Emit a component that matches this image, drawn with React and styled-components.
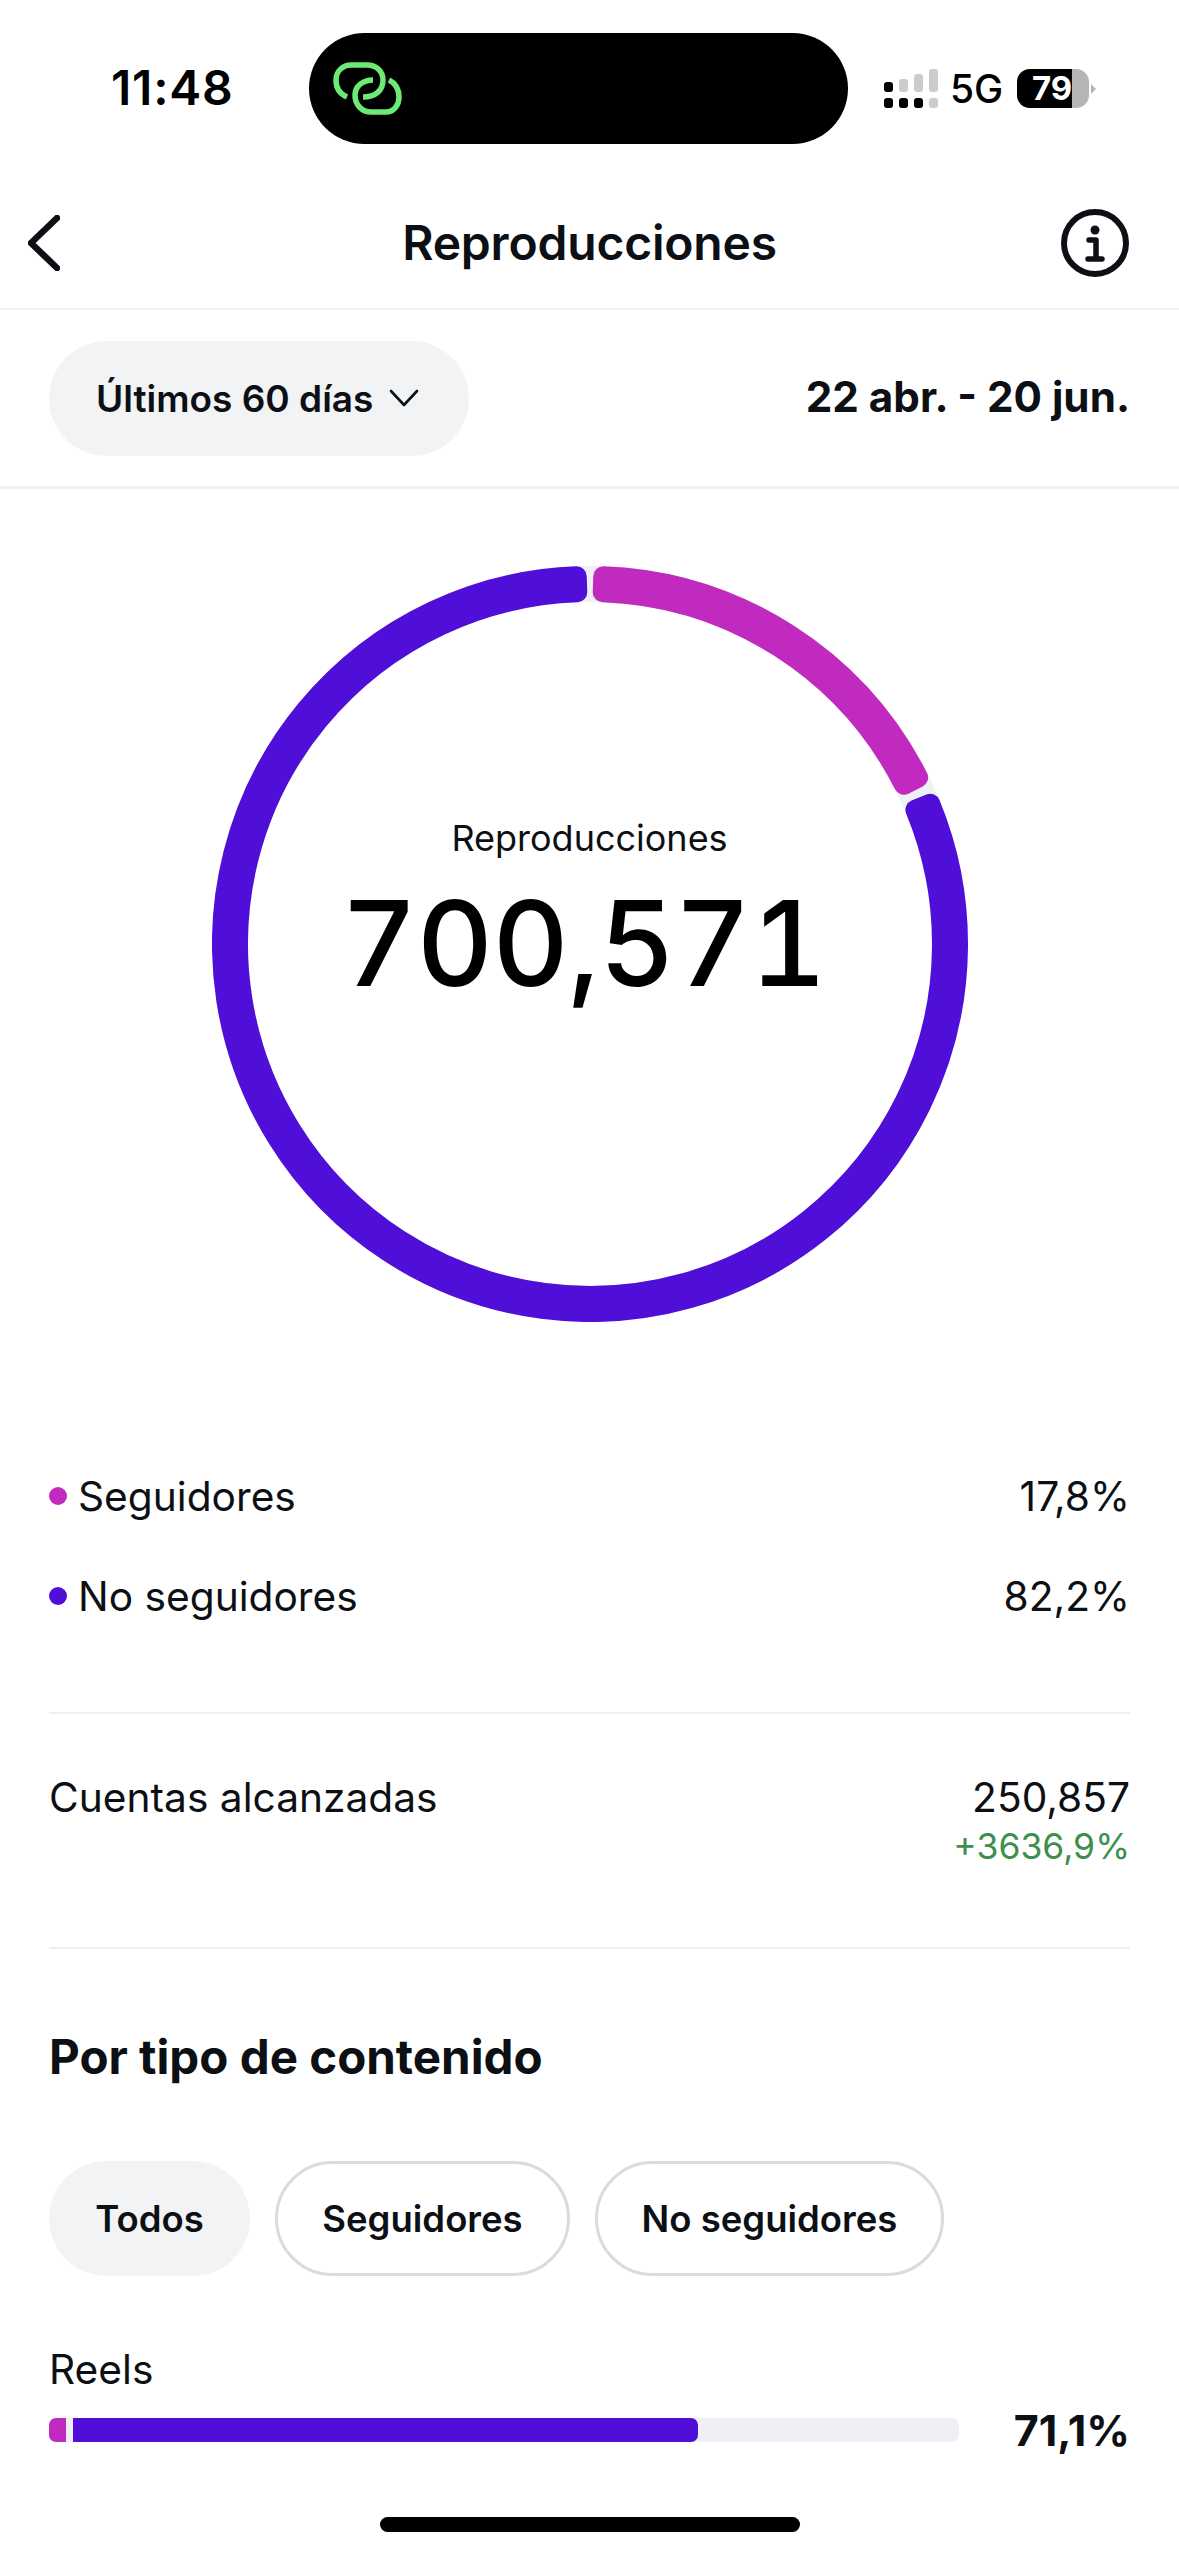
import React from "react";
import styled, { createGlobalStyle } from "styled-components";

const PURPLE = "#4f0fd8";
const MAGENTA = "#c02abe";
const TRACK = "#eff0f4";

const Global = createGlobalStyle`
  html, body { margin: 0; padding: 0; background: #fff; }
  * { box-sizing: border-box; }
`;

const Page = styled.div`
  position: relative;
  width: 1179px;
  height: 2556px;
  overflow: hidden;
  background: #fff;
  color: #0c1014;
  font-family: Inter, "Noto Sans", sans-serif;
`;

const StatusBar = styled.div`
  height: 177px;
  padding: 33px 0 0 111px;
  display: flex;
  align-items: flex-start;
`;

const Time = styled.div`
  width: 198px;
  height: 111px;
  line-height: 110px;
  font-size: 48px;
  font-weight: 600;
  color: #000;
  letter-spacing: 0.8px;
`;

const Island = styled.div`
  width: 539px;
  height: 111px;
  border-radius: 56px;
  background: #000;
  padding-left: 23px;
  display: flex;
  align-items: center;
`;

const StatusRight = styled.div`
  height: 111px;
  margin-left: 36px;
  display: flex;
  align-items: center;
`;

const FiveG = styled.span`
  margin-left: 12px;
  font-size: 39px;
  font-weight: 500;
  color: #000;
  line-height: 1;
`;

const Battery = styled.div`
  margin-left: 14px;
  width: 72px;
  height: 39px;
  border-radius: 13px;
  overflow: hidden;
  background: #b5b5b5;
`;

const BatteryFill = styled.div`
  width: 55px;
  height: 39px;
  background: #000;
  color: #fff;
  font-size: 33px;
  font-weight: 700;
  line-height: 39px;
  text-align: right;
`;

const BatteryTip = styled.div`
  margin-left: 2px;
  width: 0;
  height: 0;
  border-top: 5px solid transparent;
  border-bottom: 5px solid transparent;
  border-left: 5px solid #b5b5b5;
`;

const Header = styled.header`
  height: 133px;
  padding: 0 50px;
  display: grid;
  grid-template-columns: 1fr auto 1fr;
  align-items: center;
  justify-items: start;
  border-bottom: 2px solid #efefef;
`;

const HeaderStart = styled.div`
  margin-left: -22px;
  display: flex;
`;

const HeaderEnd = styled.div`
  justify-self: end;
  display: flex;
`;

const Title = styled.h1`
  margin: 0;
  font-size: 48px;
  font-weight: 600;
  letter-spacing: -0.2px;
`;

const RangeBar = styled.div`
  height: 179px;
  padding: 30px 49px;
  display: flex;
  align-items: center;
  justify-content: space-between;
  border-bottom: 3px solid #eff0f4;
`;

const Pill = styled.div`
  height: 115px;
  width: 420px;
  padding-left: 47px;
  border-radius: 58px;
  background: #f2f3f5;
  display: flex;
  align-items: center;
  gap: 16px;
  font-size: 37px;
  font-weight: 600;
`;

const DateRange = styled.div`
  margin-bottom: 3px;
  font-size: 42.2px;
  font-weight: 700;
`;

const Chart = styled.div`
  position: relative;
  width: 756px;
  height: 756px;
  margin: 77px auto 1px;
`;

const ChartLabel = styled.div`
  position: absolute;
  left: 0;
  right: 0;
  top: 252px;
  text-align: center;
`;

const ChartCaption = styled.div`
  font-size: 36px;
  line-height: 40px;
`;

const ChartValue = styled.div`
  margin-top: 15px;
  padding-right: 12px;
  font-size: 118px;
  font-weight: 500;
  line-height: 140px;
  letter-spacing: -0.8px;
  font-variant-numeric: tabular-nums;
  color: #000;
`;

const Section = styled.section`
  padding: 0 49px;
`;

const Legend = styled(Section)`
  margin-top: 149px;
  display: flex;
  flex-direction: column;
  gap: 50px;
`;

const Row = styled.div`
  display: flex;
  align-items: center;
  justify-content: space-between;
  height: 50px;
  font-size: 40.7px;
`;

const RowLabel = styled.div`
  display: flex;
  align-items: center;
  gap: 11px;
`;

const Dot = styled.span`
  width: 18px;
  height: 18px;
  border-radius: 50%;
  background: ${(p) => p.$color};
`;

const Rule = styled.div`
  height: 2px;
  background: #efefef;
  margin-top: ${(p) => p.$top || 0}px;
`;

const Reach = styled.div`
  margin-top: 59px;
  height: 174px;
  display: flex;
  justify-content: space-between;
  font-size: 40.7px;
  line-height: 50px;
`;

const ReachValues = styled.div`
  text-align: right;
`;

const Growth = styled.div`
  margin-top: 2px;
  font-size: 35.5px;
  line-height: 44px;
  color: #3d8f4c;
`;

const SectionTitle = styled.h2`
  margin: 83px 0 0;
  font-size: 47.5px;
  font-weight: 700;
  line-height: 50px;
`;

const Chips = styled.div`
  margin-top: 79px;
  display: flex;
  gap: 25px;
`;

const Chip = styled.div`
  height: 115px;
  width: ${(p) => p.$width}px;
  border-radius: 58px;
  display: flex;
  align-items: center;
  justify-content: center;
  font-size: 36.5px;
  font-weight: 600;
  background: ${(p) => (p.$active ? "#f2f3f5" : "#fff")};
  border: ${(p) => (p.$active ? "0" : "3px solid #dbdbdb")};
`;

const BarLabel = styled.div`
  margin-top: 69px;
  font-size: 40.7px;
  line-height: 50px;
`;

const BarRow = styled.div`
  margin-top: 9px;
  display: flex;
  align-items: center;
  justify-content: space-between;
`;

const Bar = styled.div`
  width: 910px;
  height: 24px;
  border-radius: 7px;
  background: ${TRACK};
  display: flex;
  gap: 7px;
`;

const BarPart = styled.div`
  height: 24px;
  width: ${(p) => p.$width}px;
  background: ${(p) => p.$color};
  border-radius: ${(p) => p.$radius};
`;

const BarValue = styled.div`
  font-size: 43px;
  font-weight: 700;
`;

const HomeIndicator = styled.div`
  position: absolute;
  left: 380px;
  top: 2517px;
  width: 420px;
  height: 15px;
  border-radius: 8px;
  background: #000;
`;

function polar(r, deg) {
  const a = ((deg - 90) * Math.PI) / 180;
  return `${(378 + r * Math.cos(a)).toFixed(2)} ${(378 + r * Math.sin(a)).toFixed(2)}`;
}

// annular sector, inset and stroked with a round join to get the soft corners
function sector(from, to) {
  const inset = 10;
  const outer = 378 - inset;
  const inner = 342 + inset;
  const large = to - from > 180 ? 1 : 0;
  return [
    `M ${polar(outer, from)}`,
    `A ${outer} ${outer} 0 ${large} 1 ${polar(outer, to)}`,
    `L ${polar(inner, to)}`,
    `A ${inner} ${inner} 0 ${large} 0 ${polar(inner, from)}`,
    "Z",
  ].join(" ");
}

function Ring() {
  return (
    <svg width="756" height="756" viewBox="0 0 756 756">
      <circle cx="378" cy="378" r="360" fill="none" stroke={TRACK} strokeWidth="36" />
      <path d={sector(2.07, 63.1)} fill={MAGENTA} stroke={MAGENTA} strokeWidth="20" strokeLinejoin="round" />
      <path d={sector(67.6, 357.93)} fill={PURPLE} stroke={PURPLE} strokeWidth="20" strokeLinejoin="round" />
    </svg>
  );
}

function LinkIcon() {
  return (
    <svg width="72" height="58" viewBox="52 40 72 58" fill="none" stroke="#6ceb74" strokeWidth="5.5" strokeLinecap="butt">
      <path d="M67 77 C60 74 56 68 56 60 C56 51 63 45 71 45 L87 45 C97 45 103 52 103 60 C103 71 95 77 83 77" />
      <path d="M93 60 C83 60 75 66 75 75 C75 85 82 92 91 92 L106 92 C114 92 119 85 119 77 C119 69 115 63 109 60" />
    </svg>
  );
}

function SignalIcon() {
  const bars = [
    { x: 0, y: 13, c: "#000" },
    { x: 15, y: 10, c: "#ccc" },
    { x: 30, y: 5, c: "#ccc" },
    { x: 45, y: 0, c: "#ccc" },
  ];
  return (
    <svg width="54" height="39" viewBox="0 0 54 39">
      {bars.map((b, i) => (
        <g key={i}>
          <rect x={b.x} y={b.y} width="9" height={23 - b.y} rx="3" fill={b.c} />
          <rect x={b.x} y="29" width="9" height="10" rx="3" fill={i === 3 ? "#ccc" : "#000"} />
        </g>
      ))}
    </svg>
  );
}

function BackIcon() {
  return (
    <svg width="32" height="56" viewBox="0 0 32 56" fill="none" stroke="#0c1014" strokeWidth="6.5" strokeLinecap="round" strokeLinejoin="round">
      <path d="M29 3 L3 28 L29 53" />
    </svg>
  );
}

function InfoIcon() {
  return (
    <svg width="68" height="68" viewBox="0 0 68 68" fill="none">
      <circle cx="34" cy="34" r="31" stroke="#0c1014" strokeWidth="6" />
      <circle cx="34" cy="21" r="4.5" fill="#0c1014" />
      <path d="M28 31 H35 V49 M27 50 H41" stroke="#0c1014" strokeWidth="5.5" strokeLinecap="round" strokeLinejoin="round" />
    </svg>
  );
}

function ChevronIcon() {
  return (
    <svg width="30" height="18" viewBox="0 0 30 18" fill="none" stroke="#0c1014" strokeWidth="2.6" strokeLinecap="round" strokeLinejoin="round">
      <path d="M2 2 L15 16 L28 2" />
    </svg>
  );
}

export default function App() {
  return (
    <Page>
      <Global />
      <StatusBar>
        <Time>11:48</Time>
        <Island>
          <LinkIcon />
        </Island>
        <StatusRight>
          <SignalIcon />
          <FiveG>5G</FiveG>
          <Battery>
            <BatteryFill>79</BatteryFill>
          </Battery>
          <BatteryTip />
        </StatusRight>
      </StatusBar>

      <Header>
        <HeaderStart>
          <BackIcon />
        </HeaderStart>
        <Title>Reproducciones</Title>
        <HeaderEnd>
          <InfoIcon />
        </HeaderEnd>
      </Header>

      <RangeBar>
        <Pill>
          Últimos 60 días
          <ChevronIcon />
        </Pill>
        <DateRange>22 abr. - 20 jun.</DateRange>
      </RangeBar>

      <Chart>
        <Ring />
        <ChartLabel>
          <ChartCaption>Reproducciones</ChartCaption>
          <ChartValue>700,571</ChartValue>
        </ChartLabel>
      </Chart>

      <Legend>
        <Row>
          <RowLabel>
            <Dot $color={MAGENTA} />
            Seguidores
          </RowLabel>
          <span>17,8%</span>
        </Row>
        <Row>
          <RowLabel>
            <Dot $color={PURPLE} />
            No seguidores
          </RowLabel>
          <span>82,2%</span>
        </Row>
      </Legend>

      <Section>
        <Rule $top={91} />
        <Reach>
          <span>Cuentas alcanzadas</span>
          <ReachValues>
            250,857
            <Growth>+3636,9%</Growth>
          </ReachValues>
        </Reach>
        <Rule />
        <SectionTitle>Por tipo de contenido</SectionTitle>
        <Chips>
          <Chip $active $width={201}>Todos</Chip>
          <Chip $width={295}>Seguidores</Chip>
          <Chip $width={349}>No seguidores</Chip>
        </Chips>
        <BarLabel>Reels</BarLabel>
        <BarRow>
          <Bar>
            <BarPart $color={MAGENTA} $radius="7px 0 0 7px" $width={17} />
            <BarPart $color={PURPLE} $radius="0 7px 7px 0" $width={625} />
          </Bar>
          <BarValue>71,1%</BarValue>
        </BarRow>
      </Section>

      <HomeIndicator />
    </Page>
  );
}
